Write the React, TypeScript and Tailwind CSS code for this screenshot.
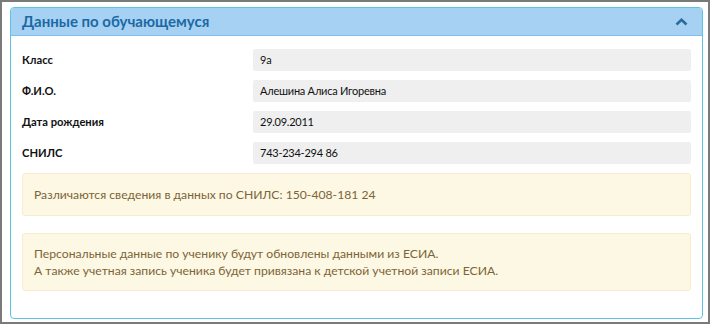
import React from 'react';

const rows = [
  { label: 'Класс', value: '9а' },
  { label: 'Ф.И.О.', value: 'Алешина Алиса Игоревна' },
  { label: 'Дата рождения', value: '29.09.2011' },
  { label: 'СНИЛС', value: '743-234-294 86' },
];

const App: React.FC = () => {
  return (
    <div
      className="w-[710px] h-[324px] border-2 border-[#7a7a7a] bg-white pl-[8px] pt-[5px]"
      style={{ fontFamily: 'Lato, "Open Sans", sans-serif' }}
    >
      <div className="w-[693px] h-[312px] border border-[#5ec4e6] rounded-[4px] overflow-hidden">
        {/* header */}
        <div className="h-[28px] bg-[#a6d1f2] border-b border-[#7ec0ea] flex items-center justify-between pl-[11px] pr-[14px]">
          <span className="text-[15px] font-bold text-[#1c69a4]">Данные по обучающемуся</span>
          <svg width="13" height="8" viewBox="0 0 13 8" className="mt-[1px]">
            <path d="M1.5 6.5 L6.5 1.8 L11.5 6.5" fill="none" stroke="#2a6c9c" strokeWidth="2.6" />
          </svg>
        </div>

        {/* body */}
        <div className="pt-[13px] px-[11px]">
          <div className="flex flex-col gap-[9px]">
            {rows.map((r) => (
              <div key={r.label} className="flex items-center">
                <div className="w-[231px] text-[11.2px] font-bold text-[#111]">{r.label}</div>
                <div className="flex-1 h-[22px] bg-[#efefef] rounded-[2px] flex items-center pl-[7px] text-[11px] tracking-[-0.25px] text-[#111]">
                  {r.value}
                </div>
              </div>
            ))}
          </div>

          <div className="mt-[9px] border border-[#faebcc] bg-[#fcf8e3] rounded-[3px] px-[11px] pt-[12px] pb-[11px] text-[12.2px] leading-[18px] text-[#7d6438]">
            Различаются сведения в данных по СНИЛС: 150-408-181 24
          </div>

          <div className="mt-[17px] border border-[#faebcc] bg-[#fcf8e3] rounded-[3px] px-[11px] pt-[11px] pb-[11px] text-[12.2px] leading-[17px] text-[#7d6438]">
            <div>Персональные данные по ученику будут обновлены данными из ЕСИА.</div>
            <div>А также учетная запись ученика будет привязана к детской учетной записи ЕСИА.</div>
          </div>
        </div>
      </div>
    </div>
  );
};

export default App;
